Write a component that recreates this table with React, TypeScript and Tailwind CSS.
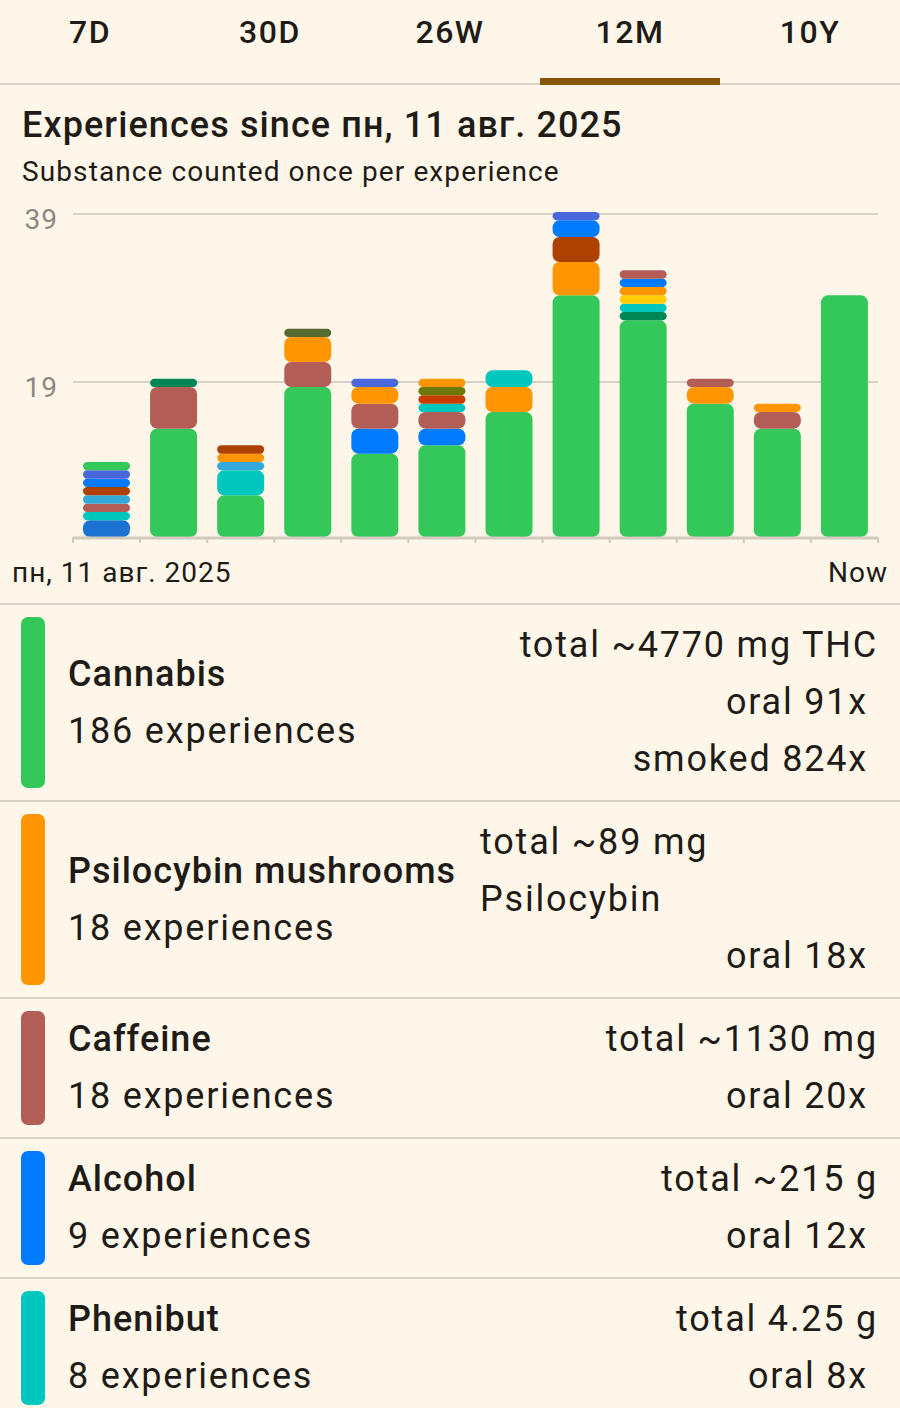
import React from "react";

const G = "#34c759";
const O = "#ff9500";
const B = "#007aff";
const T = "#00c7be";
const C = "#b35d57";
const R = "#4a68de";
const BR = "#ae4000";
const LB = "#34aadc";
const DB = "#1c72d0";
const OL = "#6e780a";
const RO = "#c83c00";
const DG = "#008557";
const Y = "#ffcc00";
const DO = "#556b2f";

type Seg = [string, number];

const bars: Seg[][] = [
  [[DB, 2], [T, 1], [C, 1], [LB, 1], [BR, 1], [B, 1], [R, 1], [G, 1]],
  [[G, 13], [C, 5], [DG, 1]],
  [[G, 5], [T, 3], [LB, 1], [O, 1], [BR, 1]],
  [[G, 18], [C, 3], [O, 3], [DO, 1]],
  [[G, 10], [B, 3], [C, 3], [O, 2], [R, 1]],
  [[G, 11], [B, 2], [C, 2], [T, 1], [RO, 1], [OL, 1], [O, 1]],
  [[G, 15], [O, 3], [T, 2]],
  [[G, 29], [O, 4], [BR, 3], [B, 2], [R, 1]],
  [[G, 26], [DG, 1], [T, 1], [Y, 1], [O, 1], [B, 1], [C, 1]],
  [[G, 16], [O, 2], [C, 1]],
  [[G, 13], [C, 2], [O, 1]],
  [[G, 29]],
];

const X0 = 73;
const X1 = 878;
const SLOT = (X1 - X0) / 12;
const BASE = 347;
const UNIT = 25 / 3;

function Chart() {
  const rects: React.ReactNode[] = [];
  bars.forEach((segs, i) => {
    let cum = 0;
    const x = X0 + SLOT * i + 10;
    segs.forEach(([color, n], j) => {
      const h = n * UNIT;
      const y = BASE - (cum + n) * UNIT;
      const r = Math.min(7, h / 2);
      rects.push(
        <rect key={`${i}-${j}`} x={x} y={y} width={47} height={h} rx={r} ry={r} fill={color} />
      );
      cum += n;
    });
  });
  const ticks = Array.from({ length: 13 }, (_, k) => X0 + SLOT * k);
  return (
    <svg width="900" height="365" viewBox="0 0 900 365" className="block">
      <line x1={X0} x2={X1} y1={24} y2={24} stroke="#d8d1c5" strokeWidth={2} />
      <line x1={X0} x2={X1} y1={192} y2={192} stroke="#d8d1c5" strokeWidth={2} />
      <text x={58} y={39} textAnchor="end" fontSize={28} letterSpacing={1} fill="#8c8782" fontFamily="Roboto, sans-serif">39</text>
      <text x={58} y={207} textAnchor="end" fontSize={28} letterSpacing={1} fill="#8c8782" fontFamily="Roboto, sans-serif">19</text>
      {rects}
      <line x1={X0} x2={X1} y1={BASE + 1} y2={BASE + 1} stroke="#d2cabd" strokeWidth={3} />
      {ticks.map((tx, k) => (
        <line key={k} x1={tx} x2={tx} y1={BASE} y2={BASE + 6} stroke="#d2cabd" strokeWidth={2} />
      ))}
    </svg>
  );
}

type Row = {
  name: string;
  count: string;
  total: string;
  routes: string[];
  bar: string;
};

const rows: Row[] = [
  { name: "Cannabis", count: "186 experiences", total: "total ~4770 mg THC", routes: ["oral 91x", "smoked 824x"], bar: "bg-[#34c759]" },
  { name: "Psilocybin mushrooms", count: "18 experiences", total: "total ~89 mg Psilocybin", routes: ["oral 18x"], bar: "bg-[#ff9500]" },
  { name: "Caffeine", count: "18 experiences", total: "total ~1130 mg", routes: ["oral 20x"], bar: "bg-[#b35d57]" },
  { name: "Alcohol", count: "9 experiences", total: "total ~215 g", routes: ["oral 12x"], bar: "bg-[#007aff]" },
  { name: "Phenibut", count: "8 experiences", total: "total 4.25 g", routes: ["oral 8x"], bar: "bg-[#00c7be]" },
];

const tabs = ["7D", "30D", "26W", "12M", "10Y"];

export default function App() {
  return (
    <div
      className="w-[900px] h-[1408px] overflow-hidden bg-[#fef7e9] text-[#1f1b16]"
      style={{ fontFamily: "Roboto, 'Noto Sans', sans-serif" }}
    >
      <div className="flex h-[85px] border-b-2 border-[#d8d1c5]">
        {tabs.map((t) => (
          <div key={t} className="relative flex-1 pt-[12px] text-center">
            <span className="text-[32px] leading-[40px] font-medium tracking-[1.5px]">{t}</span>
            {t === "12M" && (
              <div className="absolute left-0 right-0 bottom-[-2px] h-[7px] bg-[#8a5500]" />
            )}
          </div>
        ))}
      </div>

      <div className="px-[22px] pt-[18px]">
        <div className="text-[36px] leading-[44px] font-medium tracking-[1.1px] whitespace-nowrap">Experiences since пн, 11 авг. 2025</div>
        <div className="mt-[7px] text-[28px] leading-[36px] tracking-[1.1px]">Substance counted once per experience</div>
      </div>

      <Chart />

      <div className="flex justify-between pl-[12px] pr-[12px] text-[28px] leading-[36px] tracking-[1px]">
        <span>пн, 11 авг. 2025</span>
        <span>Now</span>
      </div>

      <div className="mt-[12px] border-t-2 border-[#d8d1c5]">
        {rows.map((r) => (
          <div key={r.name} className="flex pl-[21px] pr-[22px] py-[12px] border-b-2 border-[#d8d1c5]">
            <div className={`w-[24px] shrink-0 rounded-[7px] ${r.bar}`} />
            <div className="ml-[23px] flex flex-1 items-center gap-[24px] min-w-0 text-[36px] leading-[57px] tracking-[1.8px]">
              <div className="shrink-0 whitespace-nowrap">
                <div className="font-medium tracking-[1px]">{r.name}</div>
                <div>{r.count}</div>
              </div>
              <div className="flex flex-1 min-w-0 flex-col items-end">
                <div className="text-left">{r.total}</div>
                {r.routes.map((rt) => (
                  <div key={rt} className="mr-[10px] whitespace-nowrap">{rt}</div>
                ))}
              </div>
            </div>
          </div>
        ))}
      </div>
    </div>
  );
}
